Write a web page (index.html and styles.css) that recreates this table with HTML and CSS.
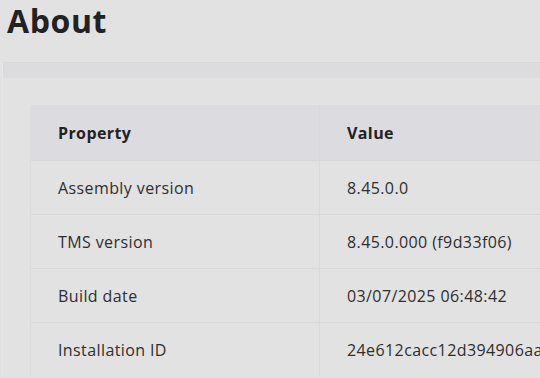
FILE: index.html
```html
<!DOCTYPE html>
<html>
<head>
<meta charset="utf-8">
<link rel="stylesheet" href="styles.css">
</head>
<body>
<h1 class="title">About</h1>
<section class="card">
  <div class="card-head"></div>
  <div class="card-body">
    <table class="props">
      <thead>
        <tr><th>Property</th><th>Value</th></tr>
      </thead>
      <tbody>
        <tr><td>Assembly version</td><td>8.45.0.0</td></tr>
        <tr><td>TMS version</td><td>8.45.0.000 (f9d33f06)</td></tr>
        <tr><td>Build date</td><td>03/07/2025 06:48:42</td></tr>
        <tr><td>Installation ID</td><td>24e612cacc12d394906aa1f0b3c7</td></tr>
      </tbody>
    </table>
  </div>
</section>
</body>
</html>
```

FILE: styles.css
```css
html, body {
  margin: 0;
  padding: 0;
  overflow: hidden;
  background: #e2e2e2;
  font-family: "Open Sans", "DejaVu Sans", sans-serif;
  color: #2e2e2e;
}
.title {
  margin: 0;
  padding: 2px 0 0 7px;
  height: 60px;
  font-size: 32px;
  line-height: 38px;
  letter-spacing: 0.6px;
  font-weight: 700;
  color: #222;
}
.card {
  margin-left: 2px;
  border-left: 1px solid #e8e8e8;
  border-top: 1px solid #d9d9dd;
}
.card-head {
  height: 15px;
  background: #dcdcdf;
}
.card-body {
  padding: 27px 0 0 27px;
}
.props {
  border-collapse: collapse;
  width: 660px;
  font-size: 16px;
  letter-spacing: 0.4px;
}
.props th, .props td {
  text-align: left;
  padding: 0 0 0 27px;
  vertical-align: middle;
  white-space: nowrap;
}
.props th {
  height: 55px;
  background: #dcdce0;
  font-weight: 700;
  color: #222;
}
.props td {
  height: 53px;
  border-top: 1px solid #d8d8dd;
}
.props th:first-child, .props td:first-child {
  width: 261px;
  border-right: 1px solid #d8d8dd;
  border-left: 1px solid #dcdce0;
}
```
